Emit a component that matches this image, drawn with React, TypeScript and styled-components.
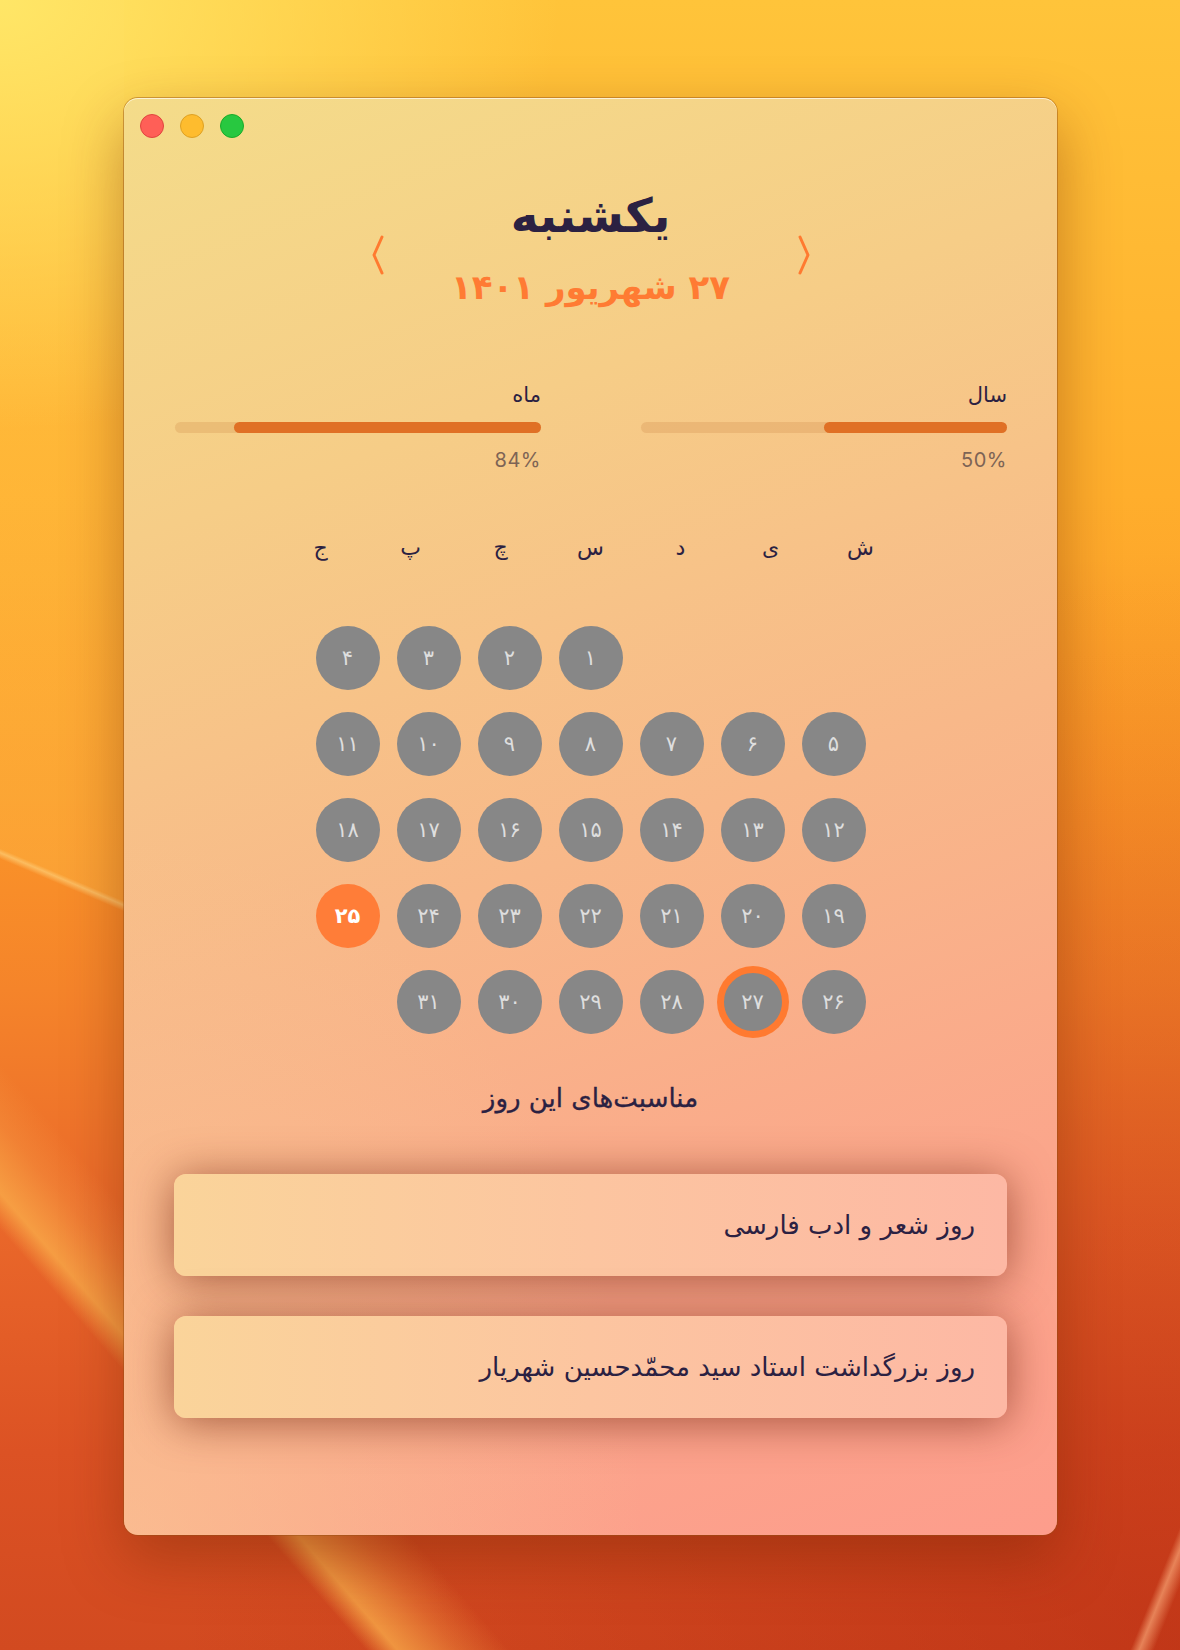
import React from "react";
import styled, { createGlobalStyle } from "styled-components";

const GlobalStyle = createGlobalStyle`
  html, body { margin: 0; padding: 0; }
  body { font-family: "DejaVu Sans", "Noto Sans", sans-serif; }
`;

const fa = (n: number | string) =>
  String(n).replace(/[0-9]/g, (d) => "۰۱۲۳۴۵۶۷۸۹"[Number(d)]);

const Desktop = styled.div`
  width: 1180px;
  height: 1650px;
  box-sizing: border-box;
  padding: 98px 0 0 124px;
  overflow: hidden;
  background:
    radial-gradient(ellipse 560px 430px at 0% 0%, rgba(255, 232, 105, 0.95) 0%, rgba(255, 214, 80, 0) 100%),
    linear-gradient(203deg, rgba(255, 200, 80, 0.3) 0%, rgba(255, 195, 75, 0.35) 85.6%, rgba(255, 225, 140, 0.55) 86%, rgba(0, 0, 0, 0) 86.6%) 0 0 / 124px 1000px no-repeat,
    linear-gradient(49deg, rgba(0, 0, 0, 0) 14%, rgba(250, 175, 75, 0.75) 15.2%, rgba(248, 160, 70, 0.35) 17.5%, rgba(0, 0, 0, 0) 19.5%),
    linear-gradient(112deg, rgba(0, 0, 0, 0) 97.3%, rgba(255, 180, 130, 0.6) 97.8%, rgba(0, 0, 0, 0) 98.6%),
    radial-gradient(ellipse 1000px 1100px at 100% 100%, rgba(170, 28, 12, 0.42) 0%, rgba(170, 28, 12, 0) 100%),
    linear-gradient(180deg, #ffc43a 0%, #ffae2c 30%, #fb9628 48%, #f5842a 60%, #ea682a 74%, #dc5224 88%, #d24a20 100%);
`;

const Window = styled.div`
  width: 933px;
  height: 1437px;
  box-sizing: border-box;
  border-radius: 14px;
  overflow: hidden;
  display: flex;
  flex-direction: column;
  background:
    radial-gradient(ellipse 520px 700px at 0% 100%, rgba(249, 205, 148, 0.55) 0%, rgba(249, 205, 148, 0) 100%),
    linear-gradient(160deg, #f4dc8a 0%, #f6cd87 25%, #f8b889 52%, #fba68b 78%, #fd9d8c 100%);
  box-shadow:
    inset 0 1px 0 rgba(255, 255, 255, 0.65),
    0 0 0 1px rgba(150, 80, 20, 0.45),
    0 24px 60px rgba(110, 35, 0, 0.4);
`;

const TitleBar = styled.div`
  display: flex;
  gap: 16px;
  padding: 16px;
`;

const Light = styled.span<{ $c: string; $b: string }>`
  width: 24px;
  height: 24px;
  box-sizing: border-box;
  border-radius: 50%;
  background: ${(p) => p.$c};
  border: 1px solid ${(p) => p.$b};
`;

const Content = styled.div`
  direction: rtl;
  padding: 0 50px;
  display: flex;
  flex-direction: column;
  color: #2b2142;
`;

const Header = styled.div`
  margin-top: 32px;
  display: grid;
  grid-template-columns: 12px 400px 12px;
  column-gap: 7px;
  justify-content: center;
  align-items: center;
`;

const Chevron = styled.svg`
  width: 12px;
  height: 40px;
  margin-top: 8px;
`;

const HeaderCenter = styled.div`
  display: flex;
  flex-direction: column;
  align-items: center;
`;

const DayName = styled.div`
  font-size: 47px;
  font-weight: 700;
  line-height: 60px;
  color: #2b2142;
`;

const DateLine = styled.div`
  margin-top: 13px;
  font-size: 34px;
  font-weight: 700;
  line-height: 56px;
  color: #ff7b33;
`;

const Progress = styled.div`
  margin-top: 66px;
  display: grid;
  grid-template-columns: 366px 366px;
  column-gap: 100px;
`;

const ProgressItem = styled.div`
  display: flex;
  flex-direction: column;
`;

const ProgressLabel = styled.div`
  font-size: 21px;
  line-height: 28px;
  color: #2b2142;
`;

const Track = styled.div`
  margin-top: 13px;
  height: 11px;
  border-radius: 6px;
  background: rgba(195, 115, 50, 0.2);
  display: flex;
`;

const Fill = styled.div`
  height: 100%;
  border-radius: 6px;
  background: #e07025;
`;

const Percent = styled.div`
  margin-top: 14px;
  font-family: "Inter", "Liberation Sans", sans-serif;
  font-size: 20px;
  line-height: 26px;
  letter-spacing: 0.5px;
  color: #7d6455;
`;

const WeekHeader = styled.div`
  margin-top: 60px;
  display: grid;
  grid-template-columns: repeat(7, 90px);
  justify-content: center;
`;

const WeekDay = styled.div`
  text-align: center;
  font-size: 22px;
  line-height: 30px;
  color: #2b2142;
`;

const DaysGrid = styled.div`
  margin-top: 63px;
  display: grid;
  grid-template-columns: repeat(7, 64px);
  grid-auto-rows: 64px;
  column-gap: 17px;
  row-gap: 22px;
  justify-content: center;
`;

const DayCell = styled.div<{ $today?: boolean; $selected?: boolean }>`
  width: 64px;
  height: 64px;
  box-sizing: border-box;
  border-radius: 50%;
  display: flex;
  align-items: center;
  justify-content: center;
  font-size: 21px;
  font-weight: ${(p) => (p.$today ? 700 : 400)};
  color: ${(p) => (p.$today ? "#ffffff" : "#dedede")};
  background: ${(p) => (p.$today ? "#ff7d38" : "#878787")};
  ${(p) =>
    p.$selected
      ? `border: 3px solid #ff7a30; box-shadow: 0 0 0 4px #ff7a30;`
      : ``}
`;

const EventsTitle = styled.div`
  margin-top: 47px;
  text-align: center;
  font-size: 26px;
  line-height: 34px;
  color: #2b2142;
  -webkit-text-stroke: 0.3px #2b2142;
`;

const Cards = styled.div`
  margin-top: 59px;
  display: flex;
  flex-direction: column;
  gap: 40px;
`;

const Card = styled.div`
  height: 102px;
  box-sizing: border-box;
  border-radius: 12px;
  padding: 0 32px;
  display: flex;
  align-items: center;
  font-size: 26px;
  color: #2b2142;
  background: linear-gradient(to left, #fdb8a4 0%, #fcc5a0 50%, #fad49a 100%);
  box-shadow: 0 4px 44px rgba(110, 32, 12, 0.6);
`;

const ChevronIcon = ({ dir }: { dir: "left" | "right" }) => (
  <Chevron viewBox="0 0 12 40">
    <polyline
      points={dir === "right" ? "2,2 10,20 2,38" : "10,2 2,20 10,38"}
      fill="none"
      stroke="#ff7a30"
      strokeWidth="3"
      strokeLinecap="round"
      strokeLinejoin="round"
    />
  </Chevron>
);

const weekDays = ["ش", "ی", "د", "س", "چ", "پ", "ج"];
const offset = 3;
const days = Array.from({ length: 31 }, (_, i) => i + 1);

export default function App() {
  return (
    <>
      <GlobalStyle />
      <Desktop>
        <Window>
          <TitleBar>
            <Light $c="#ff5f57" $b="#e0443e" />
            <Light $c="#febc2e" $b="#dea123" />
            <Light $c="#28c840" $b="#1aab29" />
          </TitleBar>
          <Content>
            <Header>
              <ChevronIcon dir="right" />
              <HeaderCenter>
                <DayName>یکشنبه</DayName>
                <DateLine>{fa(27)} شهریور {fa(1401)}</DateLine>
              </HeaderCenter>
              <ChevronIcon dir="left" />
            </Header>

            <Progress>
              <ProgressItem>
                <ProgressLabel>سال</ProgressLabel>
                <Track>
                  <Fill style={{ width: "50%" }} />
                </Track>
                <Percent>50%</Percent>
              </ProgressItem>
              <ProgressItem>
                <ProgressLabel>ماه</ProgressLabel>
                <Track>
                  <Fill style={{ width: "84%" }} />
                </Track>
                <Percent>84%</Percent>
              </ProgressItem>
            </Progress>

            <WeekHeader>
              {weekDays.map((d) => (
                <WeekDay key={d}>{d}</WeekDay>
              ))}
            </WeekHeader>

            <DaysGrid>
              {Array.from({ length: offset }, (_, i) => (
                <div key={"e" + i} />
              ))}
              {days.map((d) => (
                <DayCell key={d} $today={d === 25} $selected={d === 27}>
                  {fa(d)}
                </DayCell>
              ))}
            </DaysGrid>

            <EventsTitle>مناسبت‌های این روز</EventsTitle>

            <Cards>
              <Card>روز شعر و ادب فارسی</Card>
              <Card>روز بزرگداشت استاد سید محمّدحسین شهریار</Card>
            </Cards>
          </Content>
        </Window>
      </Desktop>
    </>
  );
}
